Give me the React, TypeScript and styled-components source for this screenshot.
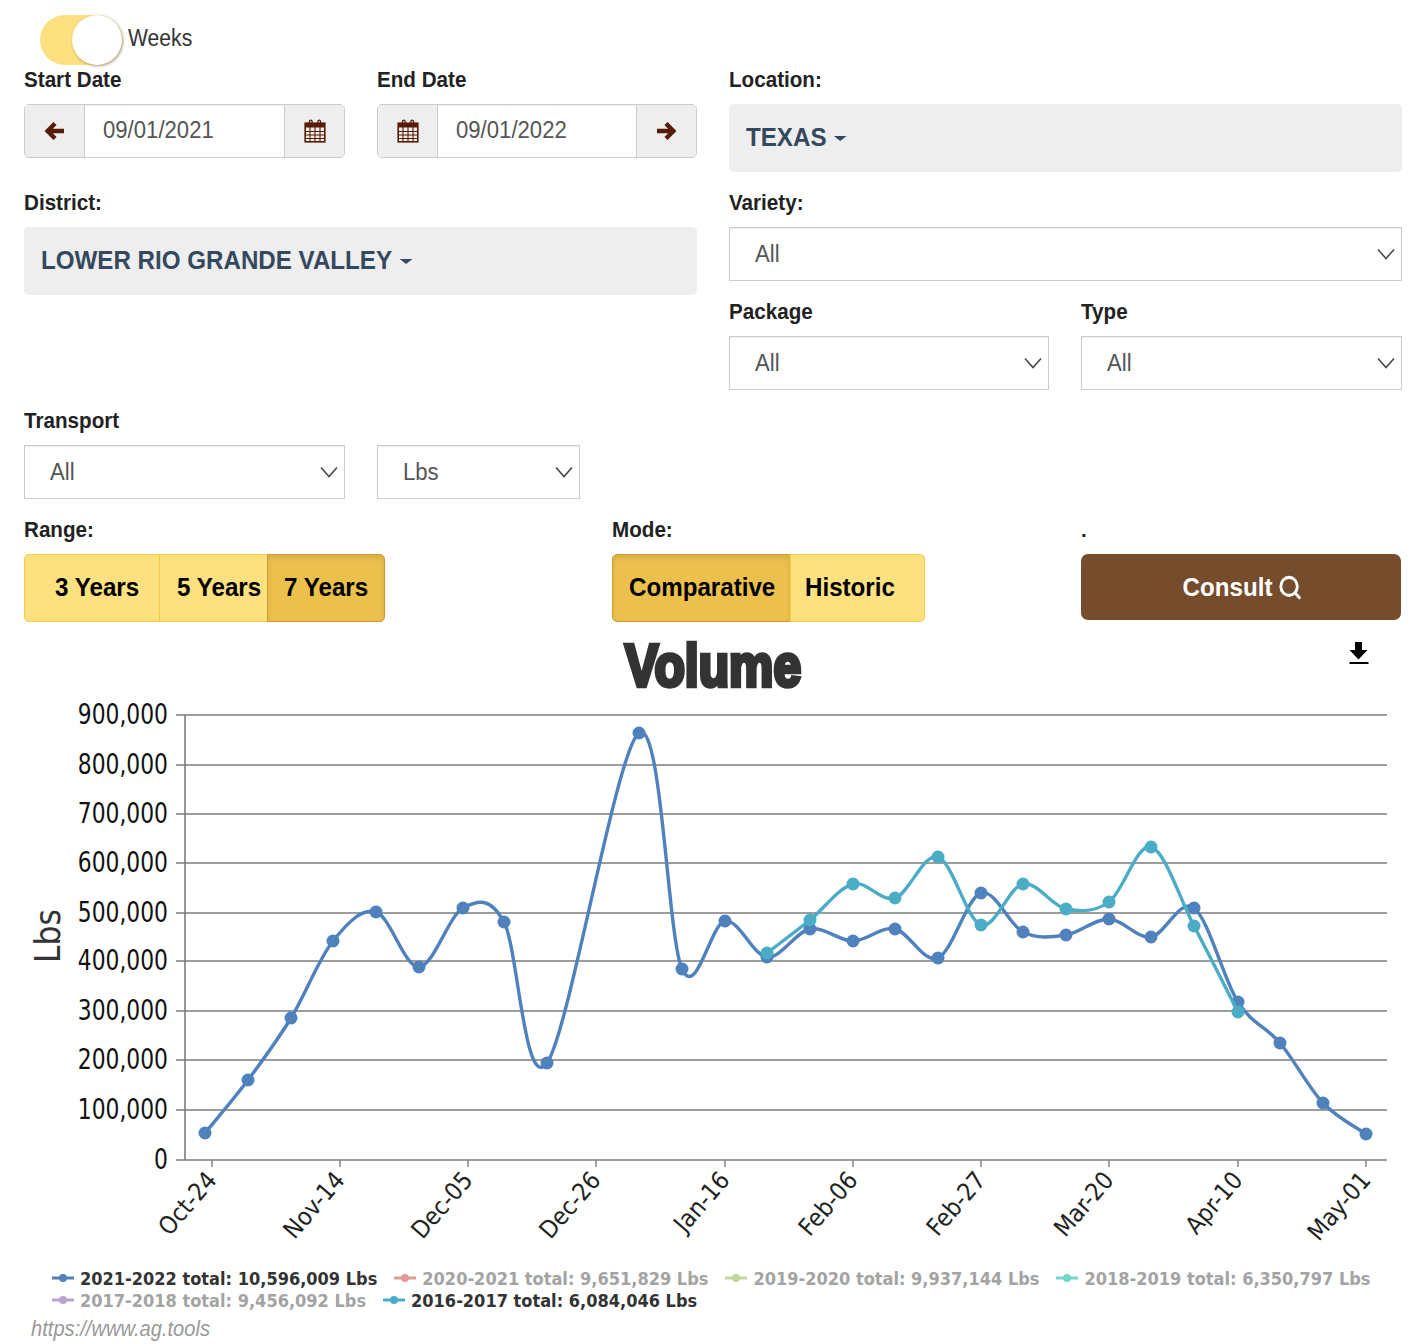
import React from 'react';
import styled, { createGlobalStyle } from 'styled-components';
import { Search } from 'lucide-react';

const GlobalStyle = createGlobalStyle`
  html, body {
    margin: 0;
    padding: 0;
    background: #fff;
    font-family: "Liberation Sans", Arial, sans-serif;
  }
`;

const Page = styled.div`
  width: 1420px;
  height: 1344px;
  overflow: hidden;
`;

const FormArea = styled.div`
  padding: 14px 18px 0 24px;
`;

// the page text is a little taller than it is wide
const Squeezed = styled.span`
  display: inline-flex;
  align-items: center;
  font-size: 1.1em;
  white-space: nowrap;
  transform: scaleX(0.915);
  transform-origin: left center;
`;

const CenterSqueezed = styled(Squeezed)`
  transform-origin: center;
`;

const ToggleRow = styled.div`
  display: flex;
  align-items: center;
  gap: 6px;
  height: 52px;
  padding-left: 16px;
  margin-bottom: 2px;
`;

const ToggleTrack = styled.div`
  width: 82px;
  height: 50px;
  border-radius: 25px;
  background: #fde07f;
  position: relative;
`;

const ToggleKnob = styled.div`
  position: absolute;
  right: 0;
  top: 0;
  width: 50px;
  height: 50px;
  border-radius: 50%;
  background: #fff;
  box-shadow: 1px 1px 3px rgba(90, 70, 10, 0.55);
`;

const ToggleLabel = styled.span`
  font-size: 21px;
  color: #333;
  margin-top: -4px;
`;

const FormGrid = styled.div`
  display: grid;
  grid-template-columns: 321px 320px 320px 321px;
  column-gap: 32px;
  row-gap: 19px;
`;

const Field = styled.div<{ $span?: number; $rows?: number; $col?: number }>`
  min-width: 0;
  ${({ $span }) => $span && `grid-column-end: span ${$span};`}
  ${({ $col }) => $col && `grid-column-start: ${$col};`}
  ${({ $rows }) => $rows && `grid-row-end: span ${$rows};`}
`;

const Label = styled.div`
  height: 24px;
  line-height: 24px;
  font-size: 20.5px;
  font-weight: 700;
  color: #222;
  margin-bottom: 12px;
`;

const DateGroup = styled.div`
  display: flex;
  height: 54px;
  border: 1px solid #ccc;
  border-radius: 5px;
  box-sizing: border-box;
  overflow: hidden;
`;

const Addon = styled.div<{ $side: 'left' | 'right' }>`
  width: 59px;
  flex: none;
  display: flex;
  align-items: center;
  justify-content: center;
  background: #eee;
  color: #571c05;
  ${({ $side }) => ($side === 'left' ? 'border-right: 1px solid #ccc;' : 'border-left: 1px solid #ccc;')}
`;

const DateValue = styled.div`
  flex: 1;
  padding-left: 18px;
  line-height: 50px;
  font-size: 22px;
  color: #555;
  background: #fff;
  box-shadow: inset 0 1px 1px rgba(0, 0, 0, 0.075);
`;

const DropdownBar = styled.div`
  height: 68px;
  box-sizing: border-box;
  display: flex;
  align-items: center;
  padding: 0 0 2px 17px;
  background: #eee;
  border-radius: 5px;
  font-size: 24px;
  font-weight: 700;
  color: #34495e;
`;

const Caret = styled.span`
  width: 0;
  height: 0;
  margin: 3px 0 0 8px;
  border-top: 5px solid #34495e;
  border-left: 7px solid transparent;
  border-right: 7px solid transparent;
`;

const SelectBox = styled.div<{ $width?: number }>`
  height: 54px;
  box-sizing: border-box;
  ${({ $width }) => $width && `width: ${$width}px;`}
  display: flex;
  align-items: center;
  justify-content: space-between;
  padding: 0 4px 0 25px;
  border: 1px solid #ccc;
  box-shadow: inset 0 1px 1px rgba(0, 0, 0, 0.075);
  font-size: 22px;
  color: #555;
`;

const ToolsRow = styled.div`
  display: grid;
  grid-template-columns: 556px 437px 1fr;
  column-gap: 32px;
  margin-top: 19px;
`;

const BtnGroup = styled.div`
  display: flex;
`;

const ToggleBtn = styled.div<{ $active?: boolean; $width: number; $pad: number }>`
  width: ${({ $width }) => $width}px;
  height: 68px;
  box-sizing: border-box;
  padding-left: ${({ $pad }) => $pad}px;
  line-height: 64px;
  font-size: 24px;
  font-weight: 700;
  color: #000;
  background: ${({ $active }) => ($active ? '#ecc04d' : '#fde07f')};
  border: 1px solid ${({ $active }) => ($active ? '#d39a32' : '#f5cf3e')};
  box-shadow: ${({ $active }) => ($active ? 'inset 0 3px 5px rgba(0, 0, 0, 0.1)' : 'none')};
  margin-left: -1px;
  &:first-child {
    margin-left: 0;
    border-radius: 5px 0 0 5px;
  }
  &:last-child {
    border-radius: 0 5px 5px 0;
  }
`;

const ConsultBtn = styled.div`
  height: 66px;
  margin: 1px 1px 0 0;
  padding-left: 3px;
  display: flex;
  align-items: center;
  justify-content: center;
  border-radius: 7px;
  background: #754c2c;
  color: #fff;
  font-size: 24px;
  font-weight: 700;
  svg {
    margin-left: 6px;
  }
`;

const ChartSvg = styled.svg`
  display: block;
  margin-top: 6px;
`;

const ChartTitle = styled.text`
  font-family: "Liberation Sans", sans-serif;
  font-weight: 700;
  font-size: 60px;
  fill: #333;
  stroke: #333;
  stroke-width: 4.4px;
  text-anchor: middle;
`;

const YTick = styled.text`
  font-family: "DejaVu Sans Condensed", "DejaVu Sans", sans-serif;
  font-stretch: condensed;
  font-size: 25px;
  fill: #111;
  text-anchor: end;
`;

const XTick = styled.text`
  font-family: "DejaVu Sans Condensed", "DejaVu Sans", sans-serif;
  font-stretch: condensed;
  font-size: 24.5px;
  fill: #222;
  text-anchor: end;
`;

const YTitle = styled.text`
  font-family: "DejaVu Sans Condensed", "DejaVu Sans", sans-serif;
  font-stretch: condensed;
  font-size: 35px;
  fill: #333;
  text-anchor: middle;
`;

const Legend = styled.div`
  display: flex;
  flex-wrap: wrap;
  column-gap: 17px;
  padding-left: 52px;
  box-sizing: border-box;
`;

const LegendItem = styled.div<{ $muted?: boolean }>`
  display: flex;
  align-items: center;
  gap: 6px;
  height: 22px;
  font-family: "DejaVu Sans Condensed", "DejaVu Sans", sans-serif;
  font-stretch: condensed;
  font-weight: 700;
  font-size: 18px;
  white-space: nowrap;
  color: ${({ $muted }) => ($muted ? '#a3a3a3' : '#333')};
`;

const SourceLink = styled.div`
  padding: 5px 0 0 31px;
  font-size: 20px;
  font-style: italic;
  color: #999;
`;

const CalendarIcon = () => (
  <svg width="22" height="24" viewBox="0 0 22 24" fill="none" stroke="currentColor">
    <rect x="1.2" y="4.2" width="19.6" height="18.6" strokeWidth="1.6" />
    <rect x="1" y="4" width="20" height="4.5" fill="currentColor" strokeWidth="0" />
    <path d="M1 12.5h20M1 16h20M1 19.5h20M6 8v15M11 8v15M16 8v15" strokeWidth="1.1" />
    <path d="M5.5 6V2.5a1.3 1.3 0 0 1 2.6 0V6M13.9 6V2.5a1.3 1.3 0 0 1 2.6 0V6" strokeWidth="1.3" />
  </svg>
);

const ArrowIcon = ({ flip }: { flip?: boolean }) => (
  <svg width="21" height="20" viewBox="0 0 21 20" fill="none" stroke="currentColor" strokeWidth="4.4"
    transform={flip ? 'scale(-1 1)' : undefined}>
    <path d="M11 2.5L3.6 10l7.4 7.5M4 10h16" />
  </svg>
);

const Chevron = () => (
  <svg width="22" height="14" viewBox="0 0 22 14" fill="none" stroke="#444" strokeWidth="1.5">
    <path d="M3 2.5l8 9 8-9" />
  </svg>
);

const LegendMarker = ({ color }: { color: string }) => (
  <svg width="22" height="10" viewBox="0 0 22 10">
    <path d="M0 5h22" stroke={color} strokeWidth="3" />
    <circle cx="11" cy="5" r="4" fill={color} />
  </svg>
);

type Pt = [number, number];

const blue: Pt[] = [
  [205, 1133], [248, 1080], [291, 1018], [333, 941], [376, 912], [419, 967], [463, 908], [504, 922],
  [547, 1063], [639, 733], [682, 969], [725, 921], [767, 957], [810, 929], [853, 941], [895, 929],
  [938, 958], [981, 893], [1023, 932], [1066, 935], [1109, 919], [1151, 937], [1194, 908], [1238, 1002],
  [1280, 1043], [1323, 1103], [1366, 1134],
];

const teal: Pt[] = [
  [767, 953], [810, 920], [853, 884], [895, 898], [938, 857], [981, 925], [1023, 884], [1066, 909],
  [1109, 902], [1151, 847], [1194, 926], [1238, 1012],
];

// catmull-rom through the points, same look as the chart's spline
const splinePath = (pts: Pt[]) => {
  let d = `M${pts[0][0]} ${pts[0][1]}`;
  for (let i = 0; i < pts.length - 1; i++) {
    const p0 = pts[Math.max(i - 1, 0)];
    const p1 = pts[i];
    const p2 = pts[i + 1];
    const p3 = pts[Math.min(i + 2, pts.length - 1)];
    const c1x = p1[0] + (p2[0] - p0[0]) / 6;
    const c1y = p1[1] + (p2[1] - p0[1]) / 6;
    const c2x = p2[0] - (p3[0] - p1[0]) / 6;
    const c2y = p2[1] - (p3[1] - p1[1]) / 6;
    d += ` C${c1x} ${c1y} ${c2x} ${c2y} ${p2[0]} ${p2[1]}`;
  }
  return d;
};

const gridLines = [
  { y: 715, label: '900,000' },
  { y: 765, label: '800,000' },
  { y: 814, label: '700,000' },
  { y: 863, label: '600,000' },
  { y: 913, label: '500,000' },
  { y: 961, label: '400,000' },
  { y: 1011, label: '300,000' },
  { y: 1060, label: '200,000' },
  { y: 1110, label: '100,000' },
  { y: 1160, label: '0' },
];

const xTicks = [
  { x: 212, label: 'Oct-24' },
  { x: 340, label: 'Nov-14' },
  { x: 468, label: 'Dec-05' },
  { x: 596, label: 'Dec-26' },
  { x: 725, label: 'Jan-16' },
  { x: 853, label: 'Feb-06' },
  { x: 981, label: 'Feb-27' },
  { x: 1109, label: 'Mar-20' },
  { x: 1238, label: 'Apr-10' },
  { x: 1366, label: 'May-01' },
];

const legendItems = [
  { text: '2021-2022 total: 10,596,009 Lbs', color: '#4f81bd' },
  { text: '2020-2021 total: 9,651,829 Lbs', color: '#e29a98', muted: true },
  { text: '2019-2020 total: 9,937,144 Lbs', color: '#c3d69b', muted: true },
  { text: '2018-2019 total: 6,350,797 Lbs', color: '#6fd6c8', muted: true },
  { text: '2017-2018 total: 9,456,092 Lbs', color: '#b9a3d3', muted: true },
  { text: '2016-2017 total: 6,084,046 Lbs', color: '#4bacc6' },
];

const Chart = () => (
  <ChartSvg width="1420" height="639" viewBox="0 628 1420 639">
    <ChartTitle transform="translate(713 686) scale(0.83 1)">Volume</ChartTitle>
    <path d="M1355 642h7v8h5.5l-9 9.5-9-9.5h5.5z" fill="#000" />
    <rect x="1349.5" y="662" width="19" height="2" fill="#000" />

    {gridLines.map((g) => (
      <React.Fragment key={g.y}>
        <line x1="176" x2="1387" y1={g.y} y2={g.y} stroke="#7c7c7c" strokeWidth="1.6" />
        <YTick transform={`translate(168 ${g.y + 9}) scale(0.97 1.12)`}>{g.label}</YTick>
      </React.Fragment>
    ))}
    <line x1="185" x2="185" y1="715" y2="1160" stroke="#7c7c7c" strokeWidth="1.6" />
    {xTicks.map((t) => (
      <React.Fragment key={t.x}>
        <line x1={t.x} x2={t.x} y1="1160" y2="1167" stroke="#7c7c7c" strokeWidth="1.4" />
        <XTick transform={`translate(${t.x + 6} 1181) rotate(-49)`}>{t.label}</XTick>
      </React.Fragment>
    ))}
    <YTitle transform="translate(60 936) rotate(-90)">Lbs</YTitle>

    <path d={splinePath(blue)} fill="none" stroke="#4f81bd" strokeWidth="3.4" />
    {blue.map(([x, y]) => <circle key={x} cx={x} cy={y} r="6.5" fill="#4f81bd" />)}
    <path d={splinePath(teal)} fill="none" stroke="#4bacc6" strokeWidth="3.4" />
    {teal.map(([x, y]) => <circle key={x} cx={x} cy={y} r="6.5" fill="#4bacc6" />)}
  </ChartSvg>
);

const App = () => (
  <Page>
    <GlobalStyle />
    <FormArea>
      <ToggleRow>
        <ToggleTrack><ToggleKnob /></ToggleTrack>
        <ToggleLabel><Squeezed>Weeks</Squeezed></ToggleLabel>
      </ToggleRow>
      <FormGrid>
        <Field>
          <Label><Squeezed>Start Date</Squeezed></Label>
          <DateGroup>
            <Addon $side="left"><ArrowIcon /></Addon>
            <DateValue><Squeezed>09/01/2021</Squeezed></DateValue>
            <Addon $side="right"><CalendarIcon /></Addon>
          </DateGroup>
        </Field>
        <Field>
          <Label><Squeezed>End Date</Squeezed></Label>
          <DateGroup>
            <Addon $side="left"><CalendarIcon /></Addon>
            <DateValue><Squeezed>09/01/2022</Squeezed></DateValue>
            <Addon $side="right"><ArrowIcon flip /></Addon>
          </DateGroup>
        </Field>
        <Field $span={2}>
          <Label><Squeezed>Location:</Squeezed></Label>
          <DropdownBar><Squeezed>TEXAS<Caret /></Squeezed></DropdownBar>
        </Field>
        <Field $span={2} $rows={2}>
          <Label><Squeezed>District:</Squeezed></Label>
          <DropdownBar><Squeezed>LOWER RIO GRANDE VALLEY<Caret /></Squeezed></DropdownBar>
        </Field>
        <Field $span={2}>
          <Label><Squeezed>Variety:</Squeezed></Label>
          <SelectBox><Squeezed>All</Squeezed><Chevron /></SelectBox>
        </Field>
        <Field $col={3}>
          <Label><Squeezed>Package</Squeezed></Label>
          <SelectBox><Squeezed>All</Squeezed><Chevron /></SelectBox>
        </Field>
        <Field>
          <Label><Squeezed>Type</Squeezed></Label>
          <SelectBox><Squeezed>All</Squeezed><Chevron /></SelectBox>
        </Field>
        <Field>
          <Label><Squeezed>Transport</Squeezed></Label>
          <SelectBox><Squeezed>All</Squeezed><Chevron /></SelectBox>
        </Field>
        <Field>
          <Label>&nbsp;</Label>
          <SelectBox $width={203}><Squeezed>Lbs</Squeezed><Chevron /></SelectBox>
        </Field>
      </FormGrid>
      <ToolsRow>
        <Field>
          <Label><Squeezed>Range:</Squeezed></Label>
          <BtnGroup>
            <ToggleBtn $width={136} $pad={30}><Squeezed>3 Years</Squeezed></ToggleBtn>
            <ToggleBtn $width={109} $pad={17}><Squeezed>5 Years</Squeezed></ToggleBtn>
            <ToggleBtn $width={118} $pad={16} $active><Squeezed>7 Years</Squeezed></ToggleBtn>
          </BtnGroup>
        </Field>
        <Field>
          <Label><Squeezed>Mode:</Squeezed></Label>
          <BtnGroup>
            <ToggleBtn $width={179} $pad={16} $active><Squeezed>Comparative</Squeezed></ToggleBtn>
            <ToggleBtn $width={135} $pad={14}><Squeezed>Historic</Squeezed></ToggleBtn>
          </BtnGroup>
        </Field>
        <Field>
          <Label>.</Label>
          <ConsultBtn><CenterSqueezed>Consult<Search size={27} strokeWidth={2.8} /></CenterSqueezed></ConsultBtn>
        </Field>
      </ToolsRow>
    </FormArea>
    <Chart />
    <Legend>
      {legendItems.map((l) => (
        <LegendItem key={l.text} $muted={l.muted}>
          <LegendMarker color={l.color} />
          {l.text}
        </LegendItem>
      ))}
    </Legend>
    <SourceLink><Squeezed>https://www.ag.tools</Squeezed></SourceLink>
  </Page>
);

export default App;
